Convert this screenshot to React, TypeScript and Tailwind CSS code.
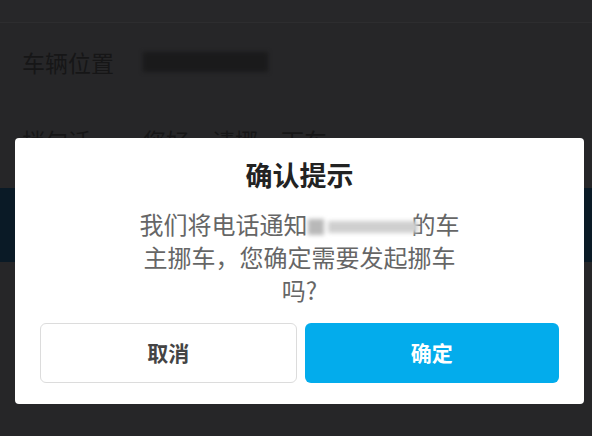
import React from 'react'

const font = { fontFamily: '"Noto Sans CJK SC", "Noto Sans", sans-serif' }

const Row = ({ label, children }: { label: string; children: React.ReactNode }) => (
  <div className="flex h-[78px] items-center px-[22px] text-[23px] text-[#161617]">
    <span className="w-[121px] shrink-0">{label}</span>
    {children}
  </div>
)

export default function App() {
  return (
    <div
      className="relative h-[436px] w-[592px] overflow-hidden bg-[#262628]"
      style={font}
    >
      <div className="h-[23px] border-b border-[#2d2d2f] bg-[#272729]" />

      <Row label="车辆位置">
        <span className="inline-block h-[20px] w-[125px] bg-[#1a1a1b] blur-[2px]" />
      </Row>
      <Row label="捎句话">
        <span>您好，请挪一下车</span>
      </Row>

      <div className="mt-[9px] h-[74px] bg-[#0a1a26]" />

      {/* confirm dialog */}
      <div className="absolute left-[15px] top-[138px] flex h-[266px] w-[569px] flex-col items-center rounded-[4px] bg-white px-[25px] pt-[19px]">
        <h2 className="text-[27px] font-bold leading-[36px] text-[#222]">
          确认提示
        </h2>
        <p className="mt-[14px] text-center text-[24px] leading-[33px] text-[#666]">
          我们将电话通知
          <span className="inline-flex h-[20px] w-[110px] items-center gap-[4px] align-middle blur-[2px]">
            <span className="h-[16px] w-[16px] bg-[#b8b8b8]" />
            <span className="h-[12px] flex-1 bg-[#cfcfcf]" />
          </span>
          <span className="-ml-[6px]">的车</span>
          <br />
          主挪车，您确定需要发起挪车
          <br />
          吗?
        </p>
        <div className="mt-auto mb-[21px] flex w-full gap-[8px]">
          <button className="h-[60px] flex-1 rounded-[6px] border border-[#dcdcdc] bg-white text-[21px] font-bold text-[#444]">
            取消
          </button>
          <button className="h-[60px] flex-1 rounded-[6px] bg-[#03acec] text-[21px] font-bold text-white">
            确定
          </button>
        </div>
      </div>
    </div>
  )
}
